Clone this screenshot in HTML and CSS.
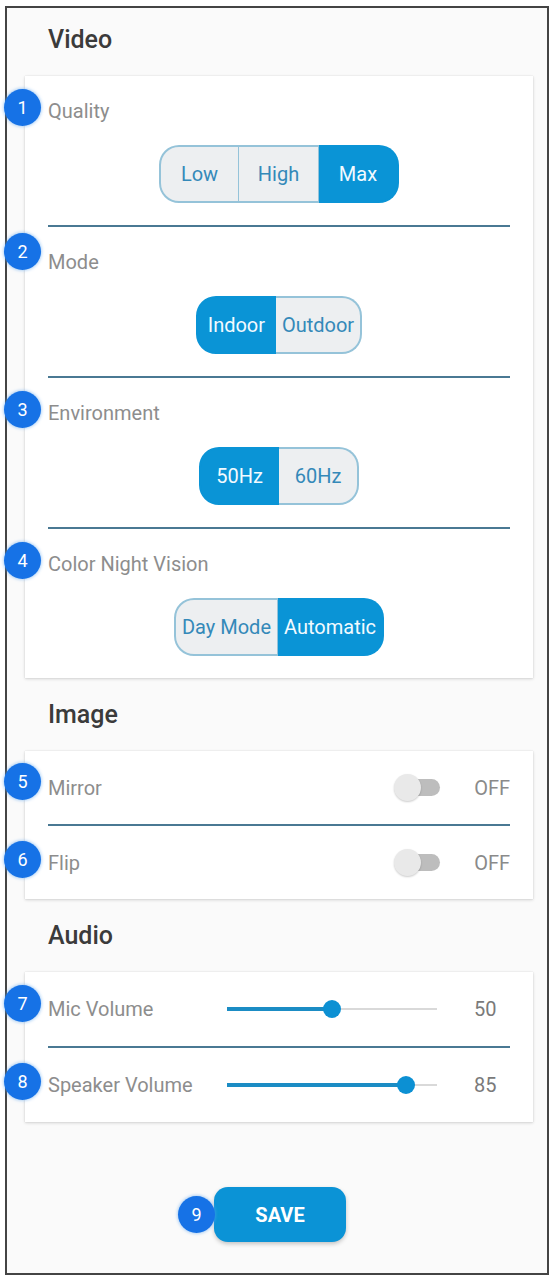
FILE: index.html
```html
<!doctype html>
<html><head>
  <title>Camera Settings</title>
  <meta charset="utf-8">
  <link rel="stylesheet" href="styles.css">
</head><body>
  <div class="frame">
    <section class="group first">
      <h2 class="group-title">Video</h2>
      <div class="card">
        <div class="setting">
          <div class="label"><span class="badge">1</span>Quality</div>
          <div class="seg-group">
            <span class="seg">Low</span><span class="seg">High</span><span class="seg on">Max</span>
          </div>
        </div>
        <div class="setting">
          <div class="label"><span class="badge lift-lg">2</span>Mode</div>
          <div class="seg-group">
            <span class="seg on">Indoor</span><span class="seg">Outdoor</span>
          </div>
        </div>
        <div class="setting">
          <div class="label"><span class="badge">3</span>Environment</div>
          <div class="seg-group">
            <span class="seg on">50Hz</span><span class="seg">60Hz</span>
          </div>
        </div>
        <div class="setting">
          <div class="label"><span class="badge">4</span>Color Night Vision</div>
          <div class="seg-group">
            <span class="seg">Day Mode</span><span class="seg on">Automatic</span>
          </div>
        </div>
      </div>
    </section>

    <section class="group">
      <h2 class="group-title">Image</h2>
      <div class="card">
        <div class="row toggle-row">
          <div class="label"><span class="badge lift-md">5</span>Mirror</div>
          <span class="toggle"><span class="thumb"></span></span>
          <span class="state">OFF</span>
        </div>
        <div class="row toggle-row">
          <div class="label"><span class="badge">6</span>Flip</div>
          <span class="toggle"><span class="thumb"></span></span>
          <span class="state">OFF</span>
        </div>
      </div>
    </section>

    <section class="group">
      <h2 class="group-title">Audio</h2>
      <div class="card">
        <div class="row slider-row">
          <div class="label"><span class="badge lift-sm">7</span>Mic Volume</div>
          <div class="slider" style="--v: 50%"><span class="fill"></span><span class="knob"></span></div>
          <span class="value">50</span>
        </div>
        <div class="row slider-row">
          <div class="label"><span class="badge">8</span>Speaker Volume</div>
          <div class="slider" style="--v: 85%"><span class="fill"></span><span class="knob"></span></div>
          <span class="value">85</span>
        </div>
      </div>
    </section>

    <div class="actions">
      <button class="save" type="button"><span class="badge">9</span>SAVE</button>
    </div>
  </div>
</body></html>
```

FILE: styles.css
```css
body {
    margin: 0;
    background: white;
    font-family: Roboto, 'Noto Sans', sans-serif;
}

.frame {
    width: 544px;
    box-sizing: border-box;
    margin: 6px 0 0 5px;
    border: 2px solid #444;
    background: #fafafa;
}

.group-title {
    margin: 0;
    padding: 22px 0 21px 41px;
    font-size: 25px;
    line-height: 30px;
    font-weight: 500;
    color: #3b3b3b;
}

.first .group-title {
    padding-top: 17px;
}

.card {
    margin: 0 14px 0 18px;
    background: white;
    box-shadow: 0 1px 3px rgba(0, 0, 0, 0.16), 0 0 1px rgba(0, 0, 0, 0.12);
}

.label {
    position: relative;
    font-size: 20px;
    line-height: 24px;
    color: #8d8d8d;
}

.badge {
    position: absolute;
    left: -44px;
    top: -10px;
    width: 37px;
    height: 37px;
    border-radius: 50%;
    background: #1672e6;
    box-shadow: 0 0 3px 1px rgba(90, 165, 240, 0.45);
    color: white;
    font: 400 18px/37px Roboto, sans-serif;
    text-align: center;
}

.lift-sm { top: -12px; }
.lift-md { top: -13px; }
.lift-lg { top: -17px; }

/* video settings */

.setting {
    margin: 0 23px;
    padding: 23px 0 22px;
}

.setting + .setting,
.row + .row {
    border-top: 2px solid #4a7993;
}

.seg-group {
    display: flex;
    justify-content: center;
    margin-top: 22px;
}

.seg {
    display: flex;
    align-items: center;
    justify-content: center;
    box-sizing: border-box;
    height: 58px;
    min-width: 80px;
    padding: 0 6px;
    border: 2px solid #95c3d9;
    border-width: 2px 1px 2px 0;
    background: #edeff1;
    color: #3489b9;
    font-size: 20px;
}

.seg:first-child {
    border-left-width: 2px;
    border-radius: 20px 0 0 20px;
}

.seg:last-child {
    border-right-width: 2px;
    border-radius: 0 20px 20px 0;
}

.seg.on {
    background: #0a94d6;
    border-color: #0a94d6;
    color: #f2faff;
}

/* rows */

.row {
    display: flex;
    align-items: center;
    margin: 0 23px;
}

.toggle-row { height: 73px; }
.slider-row { height: 74px; }

.toggle-row .label {
    flex: 1;
}

.toggle {
    position: relative;
    width: 46px;
    height: 27px;
}

.toggle::before {
    content: "";
    position: absolute;
    left: 4px;
    right: 0;
    top: 5px;
    height: 17px;
    border-radius: 9px;
    background: #bdbdbd;
}

.thumb {
    position: absolute;
    left: 0;
    top: 0;
    width: 27px;
    height: 27px;
    border-radius: 50%;
    background: #e9e9e9;
    box-shadow: 0 1px 2px rgba(0, 0, 0, 0.2);
}

.state {
    width: 36px;
    margin-left: 34px;
    text-align: right;
    font-size: 20px;
    color: #8a8a8a;
}

.slider-row .label {
    width: 179px;
}

.slider {
    position: relative;
    width: 210px;
    height: 18px;
}

.slider::before {
    content: "";
    position: absolute;
    left: 0;
    right: 0;
    top: 8px;
    height: 2px;
    background: #d9d9d9;
}

.fill {
    position: absolute;
    left: 0;
    top: 7px;
    width: var(--v);
    height: 4px;
    background: #1b8cc4;
}

.knob {
    position: absolute;
    left: var(--v);
    top: 0;
    width: 18px;
    height: 18px;
    margin-left: -9px;
    border-radius: 50%;
    background: #0c90d3;
}

.value {
    margin-left: 37px;
    font-size: 20px;
    color: #7a7a7a;
}

/* save */

.actions {
    display: flex;
    justify-content: center;
    margin: 0 13px 0 19px;
    padding: 65px 0 31px;
}

.save {
    position: relative;
    width: 132px;
    height: 55px;
    border: none;
    border-radius: 14px;
    background: #0b93d6;
    box-shadow: 0 2px 4px rgba(0, 0, 0, 0.22);
    color: white;
    font: 700 20px Roboto, sans-serif;
}

.save .badge {
    left: -36px;
    top: 9px;
}
```
